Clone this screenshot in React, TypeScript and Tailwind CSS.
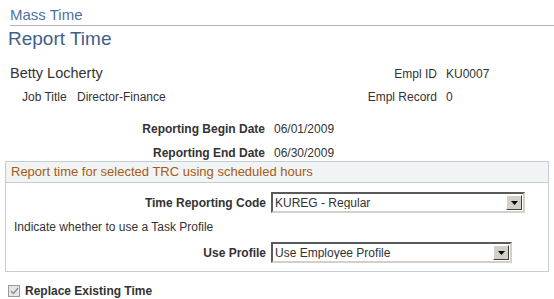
import React from "react";

function Select({ value, width }: { value: string; width: string }) {
  return (
    <div className={`flex h-[21px] items-center border-2 border-t-[#5a5a5a] border-l-[#5a5a5a] border-b-[#d4d0c8] border-r-[#d4d0c8] bg-white ${width}`}>
      <span className="flex-1 truncate pl-[2px] text-[12px] leading-none text-[#333]">{value}</span>
      <div className="m-[1px] flex h-[15px] w-[16px] items-center justify-center border border-t-white border-l-white border-b-[#404040] border-r-[#404040] bg-[#d4d0c8]">
        <svg width="7" height="4" viewBox="0 0 7 4">
          <path d="M0 0h7L3.5 4z" fill="#000" />
        </svg>
      </div>
    </div>
  );
}

export default function App() {
  return (
    <div className="h-[299px] w-[554px] overflow-hidden bg-white font-['Liberation_Sans',Arial,sans-serif] text-[#333]">
      <div className="ml-[10px] flex h-[26px] items-end border-b border-[#b0b0b0] pb-[3px] text-[15px] leading-none text-[#51719e]">
        Mass Time
      </div>
      <div className="ml-[8px] pt-[2px] text-[19px] leading-[22px] text-[#3f5f8c]">Report Time</div>

      <div className="mt-[15px] flex h-[18px] items-center">
        <div className="ml-[10px] w-[332px] text-[14.5px]">Betty Locherty</div>
        <div className="w-[95px] text-right text-[12px]">Empl ID</div>
        <div className="ml-[9px] text-[12px]">KU0007</div>
      </div>
      <div className="mt-[6px] flex h-[16px] items-center text-[12px]">
        <div className="ml-[22px] w-[55px]">Job Title</div>
        <div className="w-[265px]">Director-Finance</div>
        <div className="w-[95px] text-right">Empl Record</div>
        <div className="ml-[9px]">0</div>
      </div>

      <div className="mt-[16px] flex h-[16px] items-center text-[12px]">
        <div className="w-[265px] text-right font-bold">Reporting Begin Date</div>
        <div className="ml-[9px]">06/01/2009</div>
      </div>
      <div className="mt-[8px] flex h-[16px] items-center text-[12px]">
        <div className="w-[265px] text-right font-bold">Reporting End Date</div>
        <div className="ml-[9px]">06/30/2009</div>
      </div>

      <div className="mx-[5px] w-[544px] border border-[#c6cdd2]">
        <div className="flex h-[21px] items-center border-b border-[#c6cdd2] bg-[#f0f4f5] pl-[5px] text-[13px] text-[#a85a14]">
          Report time for selected TRC using scheduled hours
        </div>
        <div className="pb-[8px]">
          <div className="mt-[9px] flex items-center">
            <div className="w-[260px] text-right text-[12px] font-bold">Time Reporting Code</div>
            <div className="ml-[5px]">
              <Select value="KUREG - Regular" width="w-[254px]" />
            </div>
          </div>
          <div className="ml-[8px] mt-[7px] text-[12px] leading-[14px]">Indicate whether to use a Task Profile</div>
          <div className="mt-[8px] flex items-center">
            <div className="w-[260px] text-right text-[12px] font-bold">Use Profile</div>
            <div className="ml-[5px]">
              <Select value="Use Employee Profile" width="w-[241px]" />
            </div>
          </div>
        </div>
      </div>

      <div className="ml-[8px] mt-[10px] flex items-center">
        <div className="flex h-[12px] w-[12px] items-center justify-center border border-[#9a9a9a] bg-[#e6e6e6]">
          <svg width="9" height="8" viewBox="0 0 9 8">
            <path d="M1 4l2.5 2.5L8 1" fill="none" stroke="#8a8a8a" strokeWidth="1.3" />
          </svg>
        </div>
        <span className="ml-[5px] text-[12px] font-bold">Replace Existing Time</span>
      </div>
    </div>
  );
}
